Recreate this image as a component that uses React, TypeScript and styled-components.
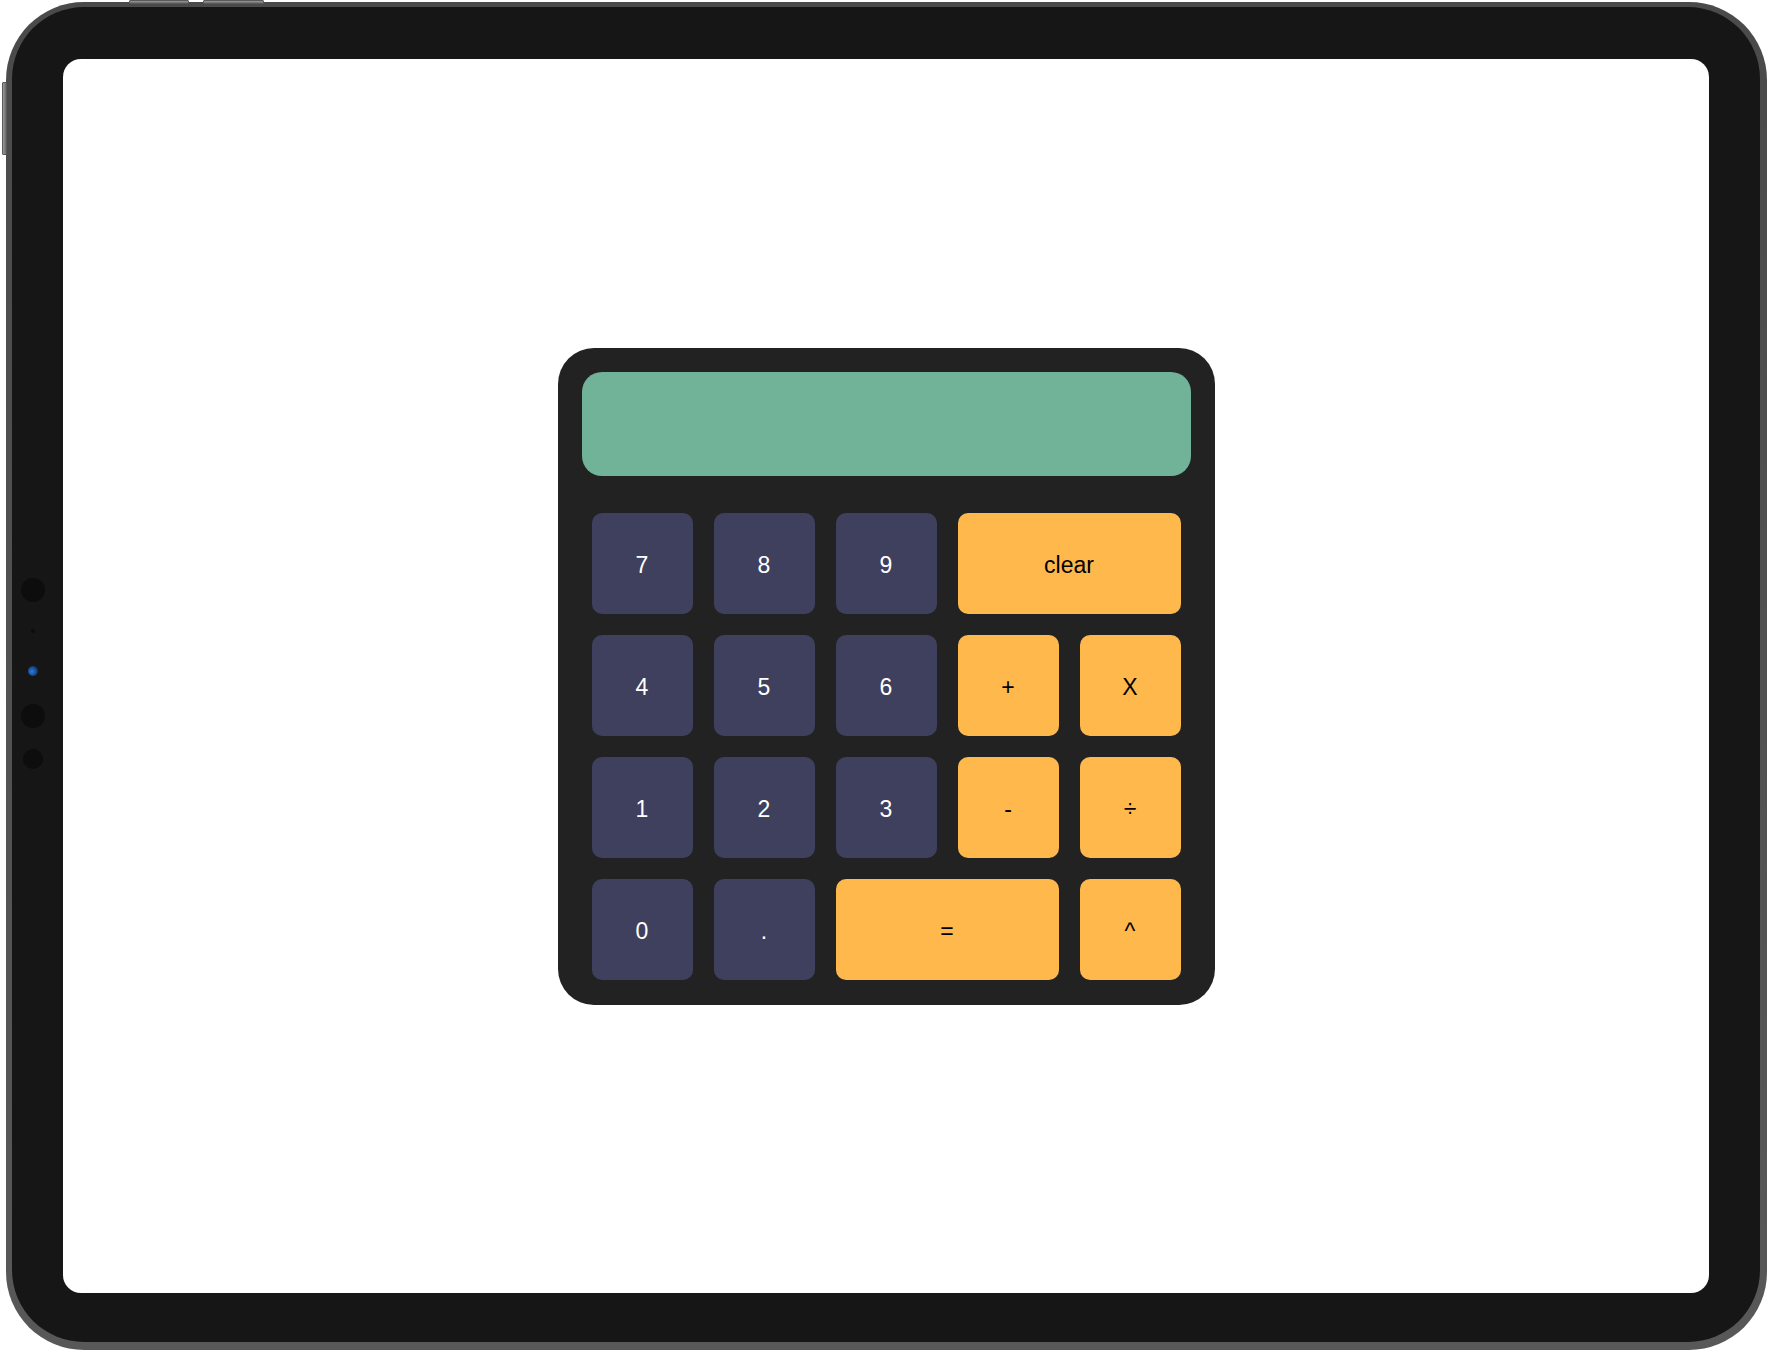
import React from "react";
import styled, { createGlobalStyle } from "styled-components";

const GlobalStyle = createGlobalStyle`
  html, body {
    margin: 0;
    padding: 0;
    background: #ffffff;
    font-family: "Liberation Sans", Arial, sans-serif;
  }
  * { box-sizing: border-box; }
`;

const Page = styled.div`
  position: relative;
  width: 1774px;
  height: 1352px;
  padding: 2px 7px 2px 6px;
  background: #ffffff;
`;

const HardwareButton = styled.div<{ $vertical?: boolean }>`
  position: absolute;
  background: linear-gradient(${(p) => (p.$vertical ? "90deg" : "180deg")}, #9a9a9a, #6a6a6a);
  border: 1px solid #5a5a5a;
  border-radius: 1px;
`;

const Device = styled.div`
  width: 1761px;
  height: 1348px;
  padding: 5px 7px 8px 6px;
  background: linear-gradient(180deg, #4a4a4a 0%, #585858 100%);
  border-radius: 78px;
  display: flex;
`;

const Bezel = styled.div`
  position: relative;
  flex: 1;
  background: #161616;
  border-radius: 72px;
  padding: 52px 51px 49px 51px;
  display: flex;
`;

const SensorColumn = styled.div`
  position: absolute;
  left: 9px;
  top: 571px;
  width: 24px;
  display: flex;
  flex-direction: column;
  align-items: center;
`;

const Sensor = styled.div<{ $size: number; $gap: number; $blue?: boolean }>`
  width: ${(p) => p.$size}px;
  height: ${(p) => p.$size}px;
  margin-top: ${(p) => p.$gap}px;
  border-radius: 50%;
  background: ${(p) =>
    p.$blue
      ? "radial-gradient(circle at 40% 55%, #2f7fe0 0%, #1a4f9c 45%, #101820 100%)"
      : "#0d0d0d"};
`;

const Screen = styled.div`
  flex: 1;
  background: #ffffff;
  border-radius: 18px;
  display: flex;
  align-items: center;
  justify-content: center;
`;

const Calculator = styled.div`
  width: 657px;
  height: 657px;
  background: #222222;
  border-radius: 36px;
  padding: 24px 24px 25px 24px;
  display: flex;
  flex-direction: column;
`;

const Display = styled.div`
  height: 104px;
  background: #71b399;
  border-radius: 20px;
`;

const Keypad = styled.div`
  margin: 37px 11px 0 10px;
  display: grid;
  grid-template-columns: repeat(5, 101px);
  grid-template-rows: repeat(4, 101px);
  gap: 21px;
`;

const Key = styled.button<{ $op?: boolean; $wide?: boolean }>`
  grid-column: ${(p) => (p.$wide ? "span 2" : "span 1")};
  border: none;
  border-radius: 10px;
  background: ${(p) => (p.$op ? "#feb84c" : "#3f405e")};
  color: ${(p) => (p.$op ? "#000000" : "#ffffff")};
  font-family: "Liberation Sans", Arial, sans-serif;
  font-size: 23px;
  display: flex;
  align-items: center;
  justify-content: center;
  padding: 4px 0 0 0;
  cursor: pointer;
`;

type KeyDef = { label: string; op?: boolean; wide?: boolean };

const keys: KeyDef[] = [
  { label: "7" },
  { label: "8" },
  { label: "9" },
  { label: "clear", op: true, wide: true },
  { label: "4" },
  { label: "5" },
  { label: "6" },
  { label: "+", op: true },
  { label: "X", op: true },
  { label: "1" },
  { label: "2" },
  { label: "3" },
  { label: "-", op: true },
  { label: "÷", op: true },
  { label: "0" },
  { label: "." },
  { label: "=", op: true, wide: true },
  { label: "^", op: true },
];

export default function App() {
  return (
    <>
      <GlobalStyle />
      <Page>
        <HardwareButton style={{ left: 129, top: 0, width: 60, height: 4 }} />
        <HardwareButton style={{ left: 203, top: 0, width: 61, height: 4 }} />
        <HardwareButton $vertical style={{ left: 2, top: 82, width: 5, height: 73 }} />
        <Device>
          <Bezel>
            <SensorColumn>
              <Sensor $size={24} $gap={0} />
              <Sensor $size={4} $gap={27} />
              <Sensor $size={10} $gap={33} $blue />
              <Sensor $size={24} $gap={28} />
              <Sensor $size={20} $gap={21} />
            </SensorColumn>
            <Screen>
              <Calculator>
                <Display />
                <Keypad>
                  {keys.map((k) => (
                    <Key key={k.label} $op={k.op} $wide={k.wide}>
                      {k.label}
                    </Key>
                  ))}
                </Keypad>
              </Calculator>
            </Screen>
          </Bezel>
        </Device>
      </Page>
    </>
  );
}
